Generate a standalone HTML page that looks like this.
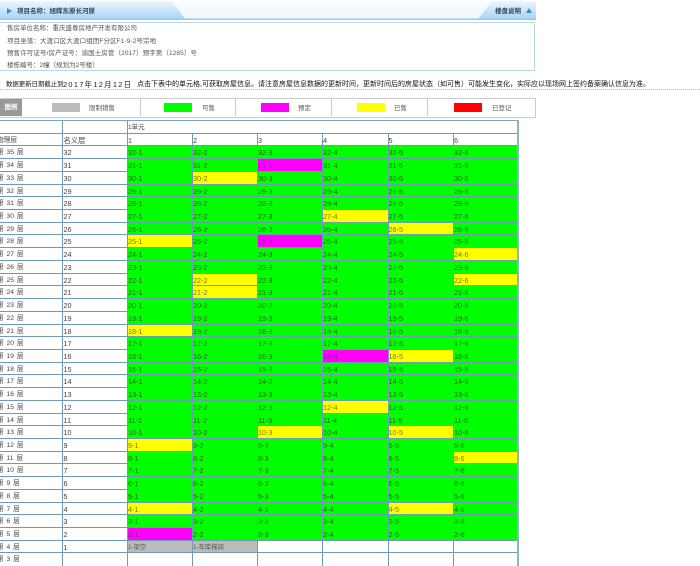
<!DOCTYPE html>
<html lang="zh"><head><meta charset="utf-8"><title>项目名称</title>
<style>
html,body{margin:0;padding:0;background:#fff}
body{width:700px;height:566px;overflow:hidden;position:relative}
#w{position:absolute;left:0;top:0;width:700px;height:566px;overflow:hidden;filter:blur(.3px);font-family:"Liberation Sans","Noto Sans CJK SC",sans-serif;color:#555;font-size:6.5px}
.a{position:absolute;white-space:nowrap;line-height:10px}
.s{position:absolute;top:103px;height:9px;width:28px}
.d{position:absolute;top:99px;height:17px;width:1px;background:#ccc}
#t{position:absolute;left:-3px;top:120px;width:521px;height:446px;border-top:1px solid #7ea6b8;background:#6f9bb3}
#rb{position:absolute;left:517px;top:120px;width:2px;height:446px;background:#8fb2c0}
.r{display:grid;grid-template-columns:64.5px 64.5px 64px 64px 64px 64.5px 64.5px 63.5px;column-gap:1px;height:11.73px;margin-bottom:1px;width:521px}
.r span{display:block;background:#0f0;color:#1f6a10;font-size:7.3px;line-height:13px;white-space:nowrap;overflow:hidden}
.r span:nth-child(1),.r span:nth-child(2){background:#fff;color:#444}
.r span:nth-child(1){font-size:6.7px;word-spacing:1px;line-height:14px}
.r span:nth-child(2){padding-left:1px}
.r .y{background:#ff0;color:#7a7a10}
.r .m{background:#f0f;color:#8a208a}
.r .g{background:#bbb;color:#555;font-size:6.3px}
.r .n{background:#fff;color:#444}
.r .c{grid-column:3/9;font-size:6.5px}
</style></head><body><div id="w">
<svg class="a" style="left:0;top:0" width="540" height="24" viewBox="0 0 540 24">
<defs>
<linearGradient id="g1" x1="0" y1="0" x2="0" y2="1"><stop offset="0" stop-color="#eef7fd"/><stop offset="1" stop-color="#a6d4fa"/></linearGradient>
<linearGradient id="g2" x1="0" y1="0" x2="0" y2="1"><stop offset="0" stop-color="#fbfdff"/><stop offset="1" stop-color="#eef7ff"/></linearGradient>
</defs>
<rect x="0" y="1" width="536" height="18" fill="url(#g2)"/>
<path d="M0 1H172L185 19H0Z" fill="url(#g1)"/>
<path d="M492 1H532Q536 1 536 5V19H478Z" fill="url(#g1)"/>
<rect x="0" y="18.5" width="536" height="1.5" fill="#9cc8ec"/>
</svg>
<svg class="a" style="left:6px;top:7px" width="8" height="8"><path d="M1 1L6 4L1 7Z" fill="#2f90d2"/></svg>
<div class="a" style="left:17px;top:7px;font-weight:bold;color:#345;font-size:6.5px">项目名称：旭辉东原长河原</div>
<div class="a" style="left:495px;top:7px;font-weight:bold;color:#345;font-size:6.5px">楼盘说明</div>
<svg class="a" style="left:525px;top:7px" width="8" height="8"><path d="M4 1L7 6H1Z" fill="#2f90d2"/></svg>

<div class="a" style="left:-2px;top:22px;width:535px;height:47px;border:1px solid #b9d9ea;background:#fff"></div>
<div class="a" style="left:7px;top:24px">售房单位名称：重庆盛尊房地产开发有限公司</div>
<div class="a" style="left:7px;top:37px;letter-spacing:.1px">项目坐落：大渡口区大渡口组团F分区F1-9-2号宗地</div>
<div class="a" style="left:7px;top:49px;letter-spacing:.1px">预售许可证号/房产证号：渝国土房管（2017）预字第（1285）号</div>
<div class="a" style="left:7px;top:61px">楼栋编号：2幢（规划为2号楼）</div>

<div class="a" style="left:6px;top:80px;color:#111;font-size:6.4px">数据更新日期截止到</div>
<div class="a" style="left:63px;top:80px;color:#222;font-size:7.4px;letter-spacing:1.3px">2017年12月12日</div>
<div class="a" style="left:137px;top:80px;color:#111;font-size:7px">点击下表中的单元格,可获取房屋信息。请注意房屋信息数据的更新时间，更新时间后的房屋状态（如可售）可能发生变化，实际应以现场网上签约备案确认信息为准。</div>
<div class="a" style="left:0;top:89px;width:700px;height:0;border-top:1px dotted #bbb"></div>

<div class="a" style="left:-2px;top:98px;width:536px;height:18px;border:1px solid #ccc"></div>
<div class="a" style="left:0;top:99px;width:22px;height:17px;background:#999;color:#fff;font-weight:bold;text-align:center;line-height:17px">图例</div>
<div class="d" style="left:140px"></div><div class="d" style="left:235px"></div><div class="d" style="left:331px"></div><div class="d" style="left:427px"></div>
<div class="s" style="left:52px;background:#bbb"></div>
<div class="s" style="left:164px;background:#0f0"></div>
<div class="s" style="left:261px;background:#f0f"></div>
<div class="s" style="left:357px;background:#ff0"></div>
<div class="s" style="left:454px;background:#f00"></div>
<div class="a" style="left:89px;top:103.5px">限制销售</div>
<div class="a" style="left:202px;top:103.5px">可售</div>
<div class="a" style="left:298px;top:103.5px">预定</div>
<div class="a" style="left:394px;top:103.5px">已售</div>
<div class="a" style="left:492px;top:103.5px">已登记</div>

<div id="t">
<div class="r"><span></span><span></span><span class="n c">1单元</span></div>
<div class="r"><span>物理层</span><span>名义层</span><span class="n">1</span><span class="n">2</span><span class="n">3</span><span class="n">4</span><span class="n">5</span><span class="n">6</span></div>
<div class="r"><span>第 35 层</span><span>32</span><span>32-1</span><span>32-2</span><span>32-3</span><span>32-4</span><span>32-5</span><span>32-6</span></div>
<div class="r"><span>第 34 层</span><span>31</span><span>31-1</span><span>31-2</span><span class="m">31-3</span><span>31-4</span><span>31-5</span><span>31-6</span></div>
<div class="r"><span>第 33 层</span><span>30</span><span>30-1</span><span class="y">30-2</span><span>30-3</span><span>30-4</span><span>30-5</span><span>30-6</span></div>
<div class="r"><span>第 32 层</span><span>29</span><span>29-1</span><span>29-2</span><span>29-3</span><span>29-4</span><span>29-5</span><span>29-6</span></div>
<div class="r"><span>第 31 层</span><span>28</span><span>28-1</span><span>28-2</span><span>28-3</span><span>28-4</span><span>28-5</span><span>28-6</span></div>
<div class="r"><span>第 30 层</span><span>27</span><span>27-1</span><span>27-2</span><span>27-3</span><span class="y">27-4</span><span>27-5</span><span>27-6</span></div>
<div class="r"><span>第 29 层</span><span>26</span><span>26-1</span><span>26-2</span><span>26-3</span><span>26-4</span><span class="y">26-5</span><span>26-6</span></div>
<div class="r"><span>第 28 层</span><span>25</span><span class="y">25-1</span><span>25-2</span><span class="m">25-3</span><span>25-4</span><span>25-5</span><span>25-6</span></div>
<div class="r"><span>第 27 层</span><span>24</span><span>24-1</span><span>24-2</span><span>24-3</span><span>24-4</span><span>24-5</span><span class="y">24-6</span></div>
<div class="r"><span>第 26 层</span><span>23</span><span>23-1</span><span>23-2</span><span>23-3</span><span>23-4</span><span>23-5</span><span>23-6</span></div>
<div class="r"><span>第 25 层</span><span>22</span><span>22-1</span><span class="y">22-2</span><span>22-3</span><span>22-4</span><span>22-5</span><span class="y">22-6</span></div>
<div class="r"><span>第 24 层</span><span>21</span><span>21-1</span><span class="y">21-2</span><span>21-3</span><span>21-4</span><span>21-5</span><span>21-6</span></div>
<div class="r"><span>第 23 层</span><span>20</span><span>20-1</span><span>20-2</span><span>20-3</span><span>20-4</span><span>20-5</span><span>20-6</span></div>
<div class="r"><span>第 22 层</span><span>19</span><span>19-1</span><span>19-2</span><span>19-3</span><span>19-4</span><span>19-5</span><span>19-6</span></div>
<div class="r"><span>第 21 层</span><span>18</span><span class="y">18-1</span><span>18-2</span><span>18-3</span><span>18-4</span><span>18-5</span><span>18-6</span></div>
<div class="r"><span>第 20 层</span><span>17</span><span>17-1</span><span>17-2</span><span>17-3</span><span>17-4</span><span>17-5</span><span>17-6</span></div>
<div class="r"><span>第 19 层</span><span>16</span><span>16-1</span><span>16-2</span><span>16-3</span><span class="m">16-4</span><span class="y">16-5</span><span>16-6</span></div>
<div class="r"><span>第 18 层</span><span>15</span><span>15-1</span><span>15-2</span><span>15-3</span><span>15-4</span><span>15-5</span><span>15-6</span></div>
<div class="r"><span>第 17 层</span><span>14</span><span>14-1</span><span>14-2</span><span>14-3</span><span>14-4</span><span>14-5</span><span>14-6</span></div>
<div class="r"><span>第 16 层</span><span>13</span><span>13-1</span><span>13-2</span><span>13-3</span><span>13-4</span><span>13-5</span><span>13-6</span></div>
<div class="r"><span>第 15 层</span><span>12</span><span>12-1</span><span>12-2</span><span>12-3</span><span class="y">12-4</span><span>12-5</span><span>12-6</span></div>
<div class="r"><span>第 14 层</span><span>11</span><span>11-1</span><span>11-2</span><span>11-3</span><span>11-4</span><span>11-5</span><span>11-6</span></div>
<div class="r"><span>第 13 层</span><span>10</span><span>10-1</span><span>10-2</span><span class="y">10-3</span><span>10-4</span><span class="y">10-5</span><span>10-6</span></div>
<div class="r"><span>第 12 层</span><span>9</span><span class="y">9-1</span><span>9-2</span><span>9-3</span><span>9-4</span><span>9-5</span><span>9-6</span></div>
<div class="r"><span>第 11 层</span><span>8</span><span>8-1</span><span>8-2</span><span>8-3</span><span>8-4</span><span>8-5</span><span class="y">8-6</span></div>
<div class="r"><span>第 10 层</span><span>7</span><span>7-1</span><span>7-2</span><span>7-3</span><span>7-4</span><span>7-5</span><span>7-6</span></div>
<div class="r"><span>第 9 层</span><span>6</span><span>6-1</span><span>6-2</span><span>6-3</span><span>6-4</span><span>6-5</span><span>6-6</span></div>
<div class="r"><span>第 8 层</span><span>5</span><span>5-1</span><span>5-2</span><span>5-3</span><span>5-4</span><span>5-5</span><span>5-6</span></div>
<div class="r"><span>第 7 层</span><span>4</span><span class="y">4-1</span><span>4-2</span><span>4-3</span><span>4-4</span><span class="y">4-5</span><span>4-6</span></div>
<div class="r"><span>第 6 层</span><span>3</span><span>3-1</span><span>3-2</span><span>3-3</span><span>3-4</span><span>3-5</span><span>3-6</span></div>
<div class="r"><span>第 5 层</span><span>2</span><span class="m">2-1</span><span>2-2</span><span>2-3</span><span>2-4</span><span>2-5</span><span>2-6</span></div>
<div class="r"><span>第 4 层</span><span>1</span><span class="g">1-架空</span><span class="g">1-车库梯间</span><span class="n"></span><span class="n"></span><span class="n"></span><span class="n"></span></div>
<div class="r" style="height:14px"><span>第 3 层</span><span></span><span class="n"></span><span class="n"></span><span class="n"></span><span class="n"></span><span class="n"></span><span class="n"></span></div>
</div>
<div id="rb"></div>
</div></body></html>
